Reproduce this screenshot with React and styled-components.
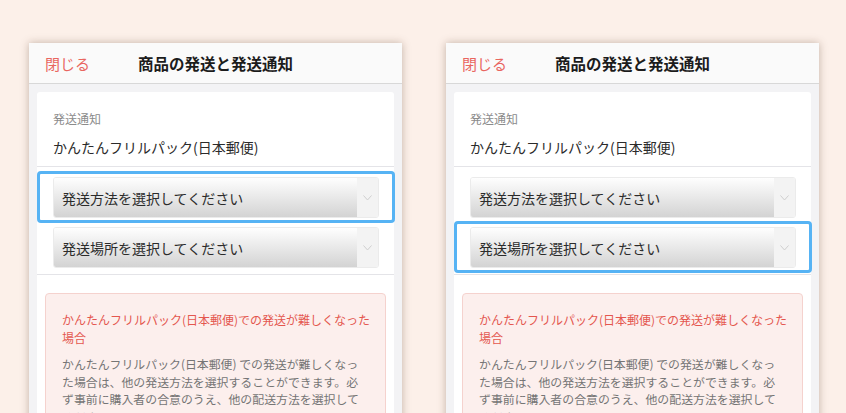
import styled, { createGlobalStyle } from 'styled-components';

const GlobalStyle = createGlobalStyle`
  html, body {
    margin: 0;
    height: 413px;
    overflow: hidden;
    background: #fcf0e9;
  }
  body {
    font-family: "Noto Sans CJK JP", "Noto Sans", sans-serif;
  }
`;

const Stage = styled.div`
  display: flex;
  gap: 44px;
  padding: 43px 0 0 29px;
`;

const Phone = styled.div`
  width: 373px;
  height: 420px;
  flex-shrink: 0;
  background: #f3f3f5;
  box-shadow: 0 0 8px rgba(90, 60, 40, 0.35);
  display: flex;
  flex-direction: column;
`;

const Header = styled.div`
  height: 40px;
  flex-shrink: 0;
  display: flex;
  align-items: center;
  position: relative;
  background: #fafafa;
  border-bottom: 1px solid #d8d8d8;
  padding: 0 16px;
`;

const CloseLink = styled.span`
  color: #e9665f;
  font-size: 15px;
`;

const Title = styled.h1`
  position: absolute;
  left: 0;
  right: 0;
  margin: 0;
  text-align: center;
  font-size: 15.5px;
  font-weight: 700;
  color: #1c1c1c;
  pointer-events: none;
`;

const Body = styled.div`
  flex: 1;
  min-height: 0;
  padding: 8px 8px 0;
`;

const Card = styled.div`
  background: #fff;
  border-radius: 3px 3px 0 0;
  height: 100%;
`;

const InfoSection = styled.div`
  padding: 18px 16px 0;
  height: 56px;
  border-bottom: 1px solid #e4e4e8;
`;

const Label = styled.div`
  font-size: 12px;
  line-height: 18px;
  color: #8b8b8b;
`;

const Value = styled.div`
  margin-top: 9px;
  font-size: 14px;
  line-height: 20px;
  color: #2b2b2b;
`;

const SelectSection = styled.div`
  padding: 4px 0 1px;
  border-bottom: 1px solid #e4e4e8;
`;

const SelectRow = styled.div`
  margin: 0 -1px 0 0;
  padding: 3px 13px 2px;
  border: 3px solid ${(p) => (p.$active ? '#56b3f4' : 'transparent')};
  border-radius: 4px;
  & + & {
    margin-top: -2px;
  }
`;

const Select = styled.div`
  display: flex;
  height: 41px;
  border: 1px solid #ebebeb;
  border-radius: 3px;
  overflow: hidden;
  box-sizing: border-box;
`;

const SelectText = styled.div`
  flex: 1;
  display: flex;
  align-items: center;
  padding-left: 8px;
  font-size: 14px;
  color: #2b2b2b;
  background: linear-gradient(#fefefe, #d3d3d3);
`;

const SelectArrow = styled.div`
  width: 21px;
  display: flex;
  align-items: center;
  justify-content: center;
  background: #f3f3f3;
`;

const NoticeSection = styled.div`
  padding: 18px 8px 0;
`;

const Notice = styled.div`
  background: #fcefed;
  border: 1px solid #f5d2ce;
  border-radius: 4px;
  padding: 17px 16px 20px;
  white-space: nowrap;
`;

const NoticeTitle = styled.div`
  color: #e4574f;
  font-size: 12px;
  line-height: 18px;
`;

const NoticeText = styled.div`
  margin-top: 8px;
  color: #757575;
  font-size: 11.9px;
  line-height: 17.5px;
`;

const Chevron = () => (
  <svg width="9" height="6" viewBox="0 0 9 6">
    <path d="M0.5 0.5 L4.5 5 L8.5 0.5" fill="none" stroke="#c9c9c9" strokeWidth="0.9" />
  </svg>
);

const ShippingSelect = ({ text, active }) => (
  <SelectRow $active={active}>
    <Select>
      <SelectText>{text}</SelectText>
      <SelectArrow>
        <Chevron />
      </SelectArrow>
    </Select>
  </SelectRow>
);

const ShippingScreen = ({ focused }) => (
  <Phone>
    <Header>
      <CloseLink>閉じる</CloseLink>
      <Title>商品の発送と発送通知</Title>
    </Header>
    <Body>
      <Card>
        <InfoSection>
          <Label>発送通知</Label>
          <Value>かんたんフリルパック(日本郵便)</Value>
        </InfoSection>
        <SelectSection>
          <ShippingSelect text="発送方法を選択してください" active={focused === 0} />
          <ShippingSelect text="発送場所を選択してください" active={focused === 1} />
        </SelectSection>
        <NoticeSection>
          <Notice>
            <NoticeTitle>
              かんたんフリルパック(日本郵便)での発送が難しくなった
              <br />
              場合
            </NoticeTitle>
            <NoticeText>
              かんたんフリルパック(日本郵便) での発送が難しくなっ
              <br />
              た場合は、他の発送方法を選択することができます。必
              <br />
              ず事前に購入者の合意のうえ、他の配送方法を選択して
              <br />
              ください。
            </NoticeText>
          </Notice>
        </NoticeSection>
      </Card>
    </Body>
  </Phone>
);

export default function App() {
  return (
    <>
      <GlobalStyle />
      <Stage>
        <ShippingScreen focused={0} />
        <ShippingScreen focused={1} />
      </Stage>
    </>
  );
}
